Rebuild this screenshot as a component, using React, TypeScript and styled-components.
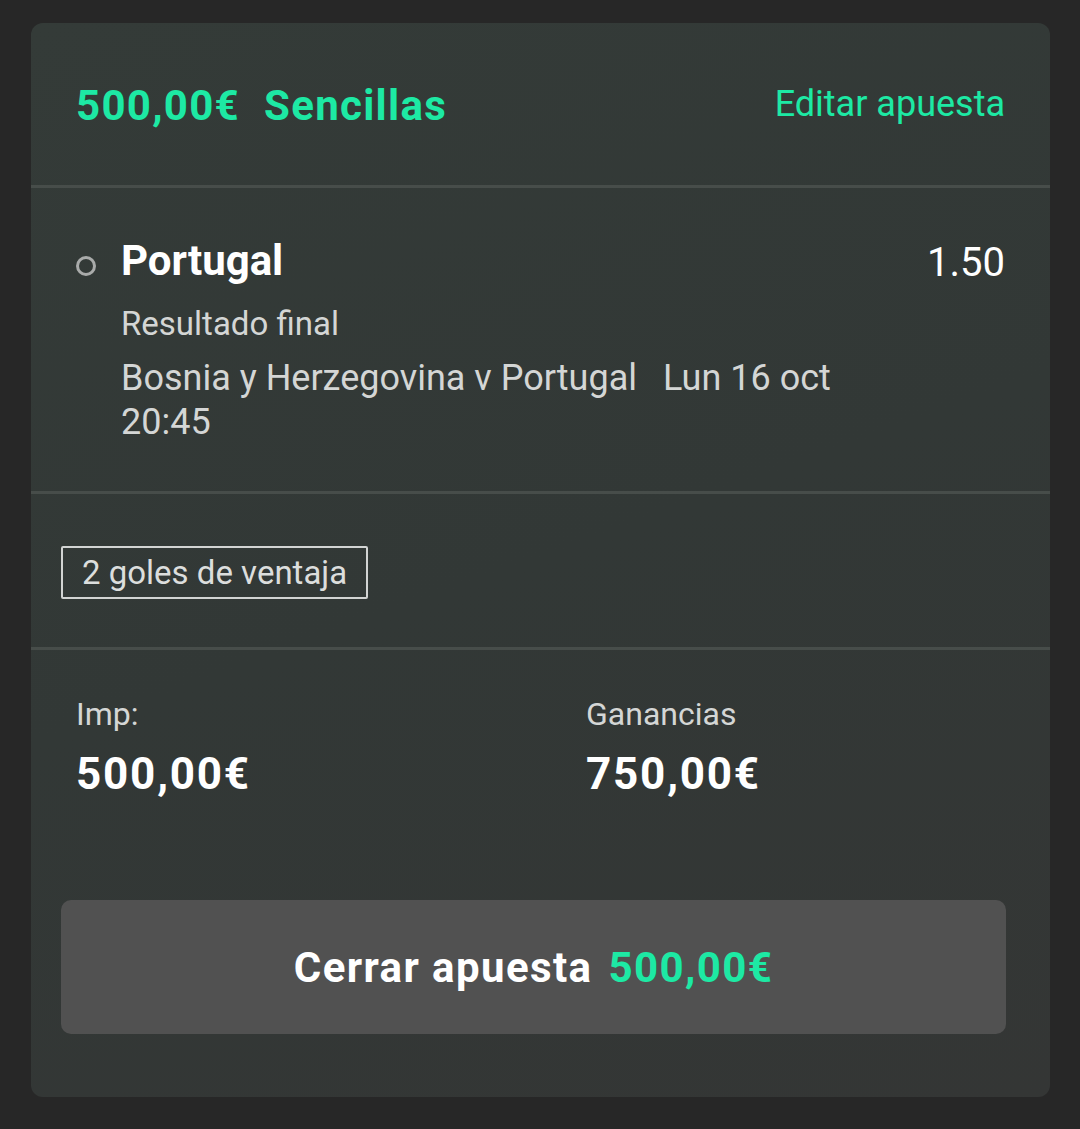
import React from "react";
import styled, { createGlobalStyle } from "styled-components";

const GlobalStyle = createGlobalStyle`
  html, body {
    margin: 0;
    padding: 0;
    background: #272727;
  }
  body {
    font-family: Roboto, "Noto Sans", "Liberation Sans", sans-serif;
    -webkit-font-smoothing: antialiased;
  }
`;

const green = "#1de9a4";

const Page = styled.div`
  width: 1080px;
  height: 1129px;
  box-sizing: border-box;
  padding: 23px 30px 0 31px;
  background: #272727;
`;

const Card = styled.div`
  background: linear-gradient(160deg, #343b38 0%, #323836 50%, #343635 100%);
  border-radius: 12px;
  overflow: hidden;
  padding-bottom: 63px;
`;

const Section = styled.div<{ $pad: string }>`
  padding: ${(p) => p.$pad};
  border-bottom: 3px solid #474d4a;
`;

const Header = styled.div`
  display: flex;
  align-items: center;
  justify-content: space-between;
  height: 162px;
  padding: 0 45px;
  border-bottom: 3px solid #474d4a;
`;

const Title = styled.div`
  display: flex;
  gap: 24px;
  color: ${green};
  font-size: 42px;
  font-weight: 700;
  letter-spacing: 1.3px;
  margin-top: 3px;
`;

const EditLink = styled.a`
  color: ${green};
  font-size: 36px;
  font-weight: 400;
  text-decoration: none;
  margin-top: -1px;
  cursor: pointer;
`;

const SelectionRow = styled.div`
  display: grid;
  grid-template-columns: 45px 1fr auto;
  align-items: start;
`;

const Radio = styled.span`
  width: 14px;
  height: 14px;
  margin-top: 20px;
  border: 3px solid #a9abaa;
  border-radius: 50%;
`;

const Info = styled.div`
  display: flex;
  flex-direction: column;
`;

const TeamName = styled.div`
  color: #ffffff;
  font-size: 42px;
  font-weight: 700;
  line-height: 50px;
`;

const Odds = styled.div`
  color: #ffffff;
  font-size: 40px;
  line-height: 50px;
  margin-top: 2px;
`;

const Market = styled.div`
  color: #d4d6d5;
  font-size: 33px;
  line-height: 40px;
  margin-top: 18px;
`;

const EventLine = styled.div`
  color: #d4d6d5;
  font-size: 36px;
  line-height: 44px;
  margin-top: 12px;
`;

const EventDate = styled.span`
  margin-left: 26px;
`;

const Tag = styled.span`
  display: inline-block;
  border: 2px solid #d2d4d3;
  border-radius: 2px;
  padding: 0 19px;
  color: #dcdedd;
  font-size: 33px;
  line-height: 49px;
`;

const Totals = styled.div`
  display: grid;
  grid-template-columns: 510px 1fr;
  padding: 44px 45px 0;
`;

const TotalLabel = styled.div`
  color: #d4d6d5;
  font-size: 32px;
  line-height: 40px;
`;

const TotalValue = styled.div`
  color: #ffffff;
  font-size: 44px;
  font-weight: 700;
  letter-spacing: 1.8px;
  line-height: 52px;
  margin-top: 14px;
`;

const ButtonWrap = styled.div`
  padding: 100px 44px 0 30px;
`;

const CloseButton = styled.button`
  width: 100%;
  height: 134px;
  border: 0;
  border-radius: 10px;
  background: #515151;
  font-family: inherit;
  font-size: 42px;
  font-weight: 700;
  letter-spacing: 1.4px;
  color: #ffffff;
  display: flex;
  align-items: center;
  justify-content: center;
  gap: 16px;
  cursor: pointer;
`;

const Amount = styled.span`
  color: ${green};
`;

export default function App() {
  return (
    <>
      <GlobalStyle />
      <Page>
        <Card>
          <Header>
            <Title>
              <span>500,00€</span>
              <span>Sencillas</span>
            </Title>
            <EditLink>Editar apuesta</EditLink>
          </Header>

          <Section $pad="48px 45px 47px 45px">
            <SelectionRow>
              <Radio />
              <Info>
                <TeamName>Portugal</TeamName>
                <Market>Resultado final</Market>
                <EventLine>
                  Bosnia y Herzegovina v Portugal
                  <EventDate>Lun 16 oct</EventDate>
                  <br />
                  20:45
                </EventLine>
              </Info>
              <Odds>1.50</Odds>
            </SelectionRow>
          </Section>

          <Section $pad="52px 30px 48px 30px">
            <Tag>2 goles de ventaja</Tag>
          </Section>

          <Totals>
            <div>
              <TotalLabel>Imp:</TotalLabel>
              <TotalValue>500,00€</TotalValue>
            </div>
            <div>
              <TotalLabel>Ganancias</TotalLabel>
              <TotalValue>750,00€</TotalValue>
            </div>
          </Totals>

          <ButtonWrap>
            <CloseButton>
              <span>Cerrar apuesta</span>
              <Amount>500,00€</Amount>
            </CloseButton>
          </ButtonWrap>
        </Card>
      </Page>
    </>
  );
}
